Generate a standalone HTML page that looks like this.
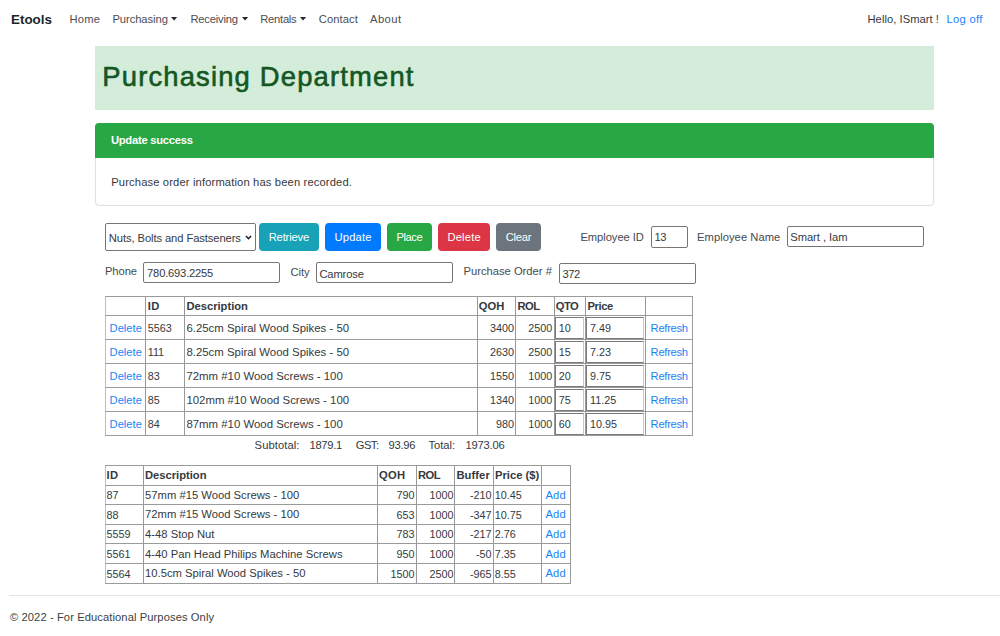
<!DOCTYPE html>
<html><head><meta charset="utf-8"><title>Purchasing</title>
<style>
html,body{margin:0;padding:0;background:#fff;width:1000px;height:636px;overflow:hidden;position:relative}
body{font-family:"Liberation Sans",sans-serif}
.t{position:absolute;white-space:pre;line-height:1;}
.b{position:absolute;}
</style></head><body>
<span class="t" style="left:11.00px;top:12.66px;font-size:13.40px;font-weight:bold;letter-spacing:0.013px;color:#212529">Etools</span>
<span class="t" style="left:69.60px;top:13.52px;font-size:11.20px;letter-spacing:0.165px;color:#4a4e53">Home</span>
<span class="t" style="left:112.40px;top:13.52px;font-size:11.20px;letter-spacing:-0.051px;color:#4a4e53">Purchasing</span>
<svg class="b" style="left:171.4px;top:16.6px" width="7" height="5" viewBox="0 0 7 5"><path d="M0 0 H6.2 L3.1 3.6 Z" fill="#25292d"/></svg>
<span class="t" style="left:190.40px;top:13.52px;font-size:11.20px;letter-spacing:-0.196px;color:#4a4e53">Receiving</span>
<svg class="b" style="left:241.7px;top:16.6px" width="7" height="5" viewBox="0 0 7 5"><path d="M0 0 H6.2 L3.1 3.6 Z" fill="#25292d"/></svg>
<span class="t" style="left:260.30px;top:13.52px;font-size:11.20px;letter-spacing:-0.261px;color:#4a4e53">Rentals</span>
<svg class="b" style="left:300px;top:16.6px" width="7" height="5" viewBox="0 0 7 5"><path d="M0 0 H6.2 L3.1 3.6 Z" fill="#25292d"/></svg>
<span class="t" style="left:318.80px;top:13.52px;font-size:11.20px;letter-spacing:0.086px;color:#4a4e53">Contact</span>
<span class="t" style="left:370.00px;top:13.52px;font-size:11.20px;letter-spacing:0.453px;color:#4a4e53">About</span>
<span class="t" style="left:867.50px;top:13.52px;font-size:11.20px;letter-spacing:0.039px;color:#35393d">Hello, ISmart !</span>
<span class="t" style="left:946.50px;top:13.52px;font-size:11.20px;letter-spacing:0.325px;color:#1a84f7">Log off</span>
<div class="b" style="left:95.00px;top:46.00px;width:839.00px;height:64.00px;background:#d4edda"></div>
<span class="t" style="left:102.30px;top:63.21px;font-size:27.40px;letter-spacing:1.168px;-webkit-text-stroke:0.6px #155724;color:#155724">Purchasing Department</span>
<div class="b" style="left:95.00px;top:123.00px;width:839.00px;height:82.50px;border:1px solid rgba(0,0,0,.125);border-radius:4px;box-sizing:border-box;overflow:hidden"></div>
<div class="b" style="left:95.00px;top:123.00px;width:839.00px;height:35.00px;background:#28a745;border-radius:4px 4px 0 0"></div>
<span class="t" style="left:110.90px;top:135.42px;font-size:11.20px;font-weight:bold;letter-spacing:-0.238px;color:#fff">Update success</span>
<span class="t" style="left:111.20px;top:176.52px;font-size:11.20px;letter-spacing:0.143px;color:#35393d">Purchase order information has been recorded.</span>
<div class="b" style="left:104.60px;top:223.00px;width:151.10px;height:27.70px;border:1px solid #767676;border-radius:2px;box-sizing:border-box;background:#fff"></div>
<span class="t" style="left:108.80px;top:232.72px;font-size:11.20px;letter-spacing:-0.086px;color:#35393d">Nuts, Bolts and Fastseners</span>
<svg class="b" style="left:245px;top:234.5px" width="7" height="5" viewBox="0 0 7 5"><path d="M0.9 0.9 L3.5 3.6 L6.1 0.9" fill="none" stroke="#212529" stroke-width="1.5"/></svg>
<div class="b" style="left:259.00px;top:223.00px;width:60.00px;height:28.00px;background:#17a2b8;border-radius:4px"></div>
<span class="t" style="left:268.65px;top:232.02px;font-size:11.20px;letter-spacing:-0.146px;color:#fff">Retrieve</span>
<div class="b" style="left:325.00px;top:223.00px;width:56.00px;height:28.00px;background:#007bff;border-radius:4px"></div>
<span class="t" style="left:334.55px;top:232.02px;font-size:11.20px;letter-spacing:0.156px;color:#fff">Update</span>
<div class="b" style="left:387.00px;top:223.00px;width:45.20px;height:28.00px;background:#28a745;border-radius:4px"></div>
<span class="t" style="left:396.40px;top:232.02px;font-size:11.20px;letter-spacing:-0.400px;color:#fff">Place</span>
<div class="b" style="left:438.00px;top:223.00px;width:52.20px;height:28.00px;background:#dc3545;border-radius:4px"></div>
<span class="t" style="left:447.40px;top:232.02px;font-size:11.20px;letter-spacing:0.206px;color:#fff">Delete</span>
<div class="b" style="left:496.20px;top:223.00px;width:44.90px;height:28.00px;background:#6c757d;border-radius:4px"></div>
<span class="t" style="left:505.70px;top:232.02px;font-size:11.20px;letter-spacing:-0.217px;color:#fff">Clear</span>
<span class="t" style="left:580.40px;top:231.62px;font-size:11.20px;letter-spacing:-0.052px;color:#464a4f">Employee ID</span>
<div class="b" style="left:651.30px;top:226.00px;width:36.30px;height:21.50px;border:1px solid #767676;border-radius:2px;box-sizing:border-box;background:#fff"></div>
<span class="t" style="left:654.50px;top:231.62px;font-size:11.20px;letter-spacing:-0.500px;color:#35393d">13</span>
<span class="t" style="left:697.00px;top:231.62px;font-size:11.20px;letter-spacing:0.053px;color:#464a4f">Employee Name</span>
<div class="b" style="left:787.30px;top:226.30px;width:137.00px;height:21.20px;border:1px solid #767676;border-radius:2px;box-sizing:border-box;background:#fff"></div>
<span class="t" style="left:790.30px;top:231.62px;font-size:11.20px;letter-spacing:-0.060px;color:#35393d">Smart , Iam</span>
<span class="t" style="left:105.00px;top:266.12px;font-size:11.20px;letter-spacing:-0.092px;color:#464a4f">Phone</span>
<div class="b" style="left:143.20px;top:262.40px;width:137.30px;height:21.00px;border:1px solid #767676;border-radius:2px;box-sizing:border-box;background:#fff"></div>
<span class="t" style="left:147.10px;top:268.32px;font-size:11.20px;letter-spacing:-0.199px;color:#35393d">780.693.2255</span>
<span class="t" style="left:290.40px;top:266.52px;font-size:11.20px;letter-spacing:-0.021px;color:#464a4f">City</span>
<div class="b" style="left:316.20px;top:262.40px;width:137.00px;height:21.00px;border:1px solid #767676;border-radius:2px;box-sizing:border-box;background:#fff"></div>
<span class="t" style="left:319.40px;top:268.52px;font-size:11.20px;letter-spacing:-0.136px;color:#35393d">Camrose</span>
<span class="t" style="left:463.50px;top:265.72px;font-size:11.20px;letter-spacing:0.005px;color:#464a4f">Purchase Order #</span>
<div class="b" style="left:559.30px;top:262.50px;width:136.50px;height:21.00px;border:1px solid #767676;border-radius:2px;box-sizing:border-box;background:#fff"></div>
<span class="t" style="left:562.50px;top:268.52px;font-size:11.20px;letter-spacing:-0.500px;color:#35393d">372</span>
<div class="b" style="left:104.50px;top:295.90px;width:1.00px;height:139.90px;background:#bdbdbd"></div>
<div class="b" style="left:145.00px;top:295.90px;width:1.00px;height:139.90px;background:#9a9a9a"></div>
<div class="b" style="left:184.00px;top:295.90px;width:1.00px;height:139.90px;background:#9a9a9a"></div>
<div class="b" style="left:477.00px;top:295.90px;width:1.00px;height:139.90px;background:#9a9a9a"></div>
<div class="b" style="left:515.00px;top:295.90px;width:1.00px;height:139.90px;background:#9a9a9a"></div>
<div class="b" style="left:554.00px;top:295.90px;width:1.00px;height:139.90px;background:#9a9a9a"></div>
<div class="b" style="left:585.00px;top:295.90px;width:1.00px;height:139.90px;background:#9a9a9a"></div>
<div class="b" style="left:645.00px;top:295.90px;width:1.00px;height:139.90px;background:#9a9a9a"></div>
<div class="b" style="left:692.00px;top:295.90px;width:1.00px;height:139.90px;background:#9a9a9a"></div>
<div class="b" style="left:104.50px;top:295.90px;width:588.50px;height:1.00px;background:#9a9a9a"></div>
<div class="b" style="left:104.50px;top:314.90px;width:588.50px;height:1.00px;background:#9a9a9a"></div>
<div class="b" style="left:104.50px;top:338.90px;width:588.50px;height:1.00px;background:#9a9a9a"></div>
<div class="b" style="left:104.50px;top:362.90px;width:588.50px;height:1.00px;background:#9a9a9a"></div>
<div class="b" style="left:104.50px;top:386.90px;width:588.50px;height:1.00px;background:#9a9a9a"></div>
<div class="b" style="left:104.50px;top:410.90px;width:588.50px;height:1.00px;background:#9a9a9a"></div>
<div class="b" style="left:104.50px;top:434.80px;width:588.50px;height:1.00px;background:#9a9a9a"></div>
<span class="t" style="left:147.70px;top:300.72px;font-size:11.20px;font-weight:bold;letter-spacing:0.500px;color:#35393d">ID</span>
<span class="t" style="left:186.40px;top:300.72px;font-size:11.20px;font-weight:bold;letter-spacing:0.000px;color:#35393d">Description</span>
<span class="t" style="left:478.75px;top:300.72px;font-size:11.20px;font-weight:bold;letter-spacing:0.107px;color:#35393d">QOH</span>
<span class="t" style="left:517.50px;top:300.72px;font-size:11.20px;font-weight:bold;letter-spacing:-0.500px;color:#35393d">ROL</span>
<span class="t" style="left:555.75px;top:300.72px;font-size:11.20px;font-weight:bold;letter-spacing:-0.500px;color:#35393d">QTO</span>
<span class="t" style="left:587.50px;top:300.72px;font-size:11.20px;font-weight:bold;letter-spacing:-0.408px;color:#35393d">Price</span>
<span class="t" style="left:109.60px;top:322.72px;font-size:11.20px;letter-spacing:-0.014px;color:#1a84f7">Delete</span>
<span class="t" style="left:147.70px;top:323.06px;font-size:10.80px;color:#35393d">5563</span>
<span class="t" style="left:186.40px;top:322.53px;font-size:11.42px;color:#35393d">6.25cm Spiral Wood Spikes - 50</span>
<span class="t" style="left:489.97px;top:323.06px;font-size:10.80px;color:#35393d">3400</span>
<span class="t" style="left:528.37px;top:323.06px;font-size:10.80px;color:#35393d">2500</span>
<div class="b" style="left:555.30px;top:317.20px;width:28.90px;height:21.50px;border:1px solid #7a7a7a;border-right-color:#c8c8c8;box-sizing:border-box"></div>
<span class="t" style="left:558.80px;top:323.06px;font-size:10.80px;color:#35393d">10</span>
<div class="b" style="left:586.30px;top:317.20px;width:58.20px;height:21.50px;border:1px solid #7a7a7a;border-right-color:#c8c8c8;box-sizing:border-box"></div>
<span class="t" style="left:590.00px;top:323.06px;font-size:10.80px;color:#35393d">7.49</span>
<span class="t" style="left:650.60px;top:322.72px;font-size:11.20px;letter-spacing:-0.283px;color:#1a84f7">Refresh</span>
<span class="t" style="left:109.60px;top:346.72px;font-size:11.20px;letter-spacing:-0.014px;color:#1a84f7">Delete</span>
<span class="t" style="left:147.70px;top:347.06px;font-size:10.80px;color:#35393d">111</span>
<span class="t" style="left:186.40px;top:346.53px;font-size:11.42px;color:#35393d">8.25cm Spiral Wood Spikes - 50</span>
<span class="t" style="left:489.97px;top:347.06px;font-size:10.80px;color:#35393d">2630</span>
<span class="t" style="left:528.37px;top:347.06px;font-size:10.80px;color:#35393d">2500</span>
<div class="b" style="left:555.30px;top:341.20px;width:28.90px;height:21.50px;border:1px solid #7a7a7a;border-right-color:#c8c8c8;box-sizing:border-box"></div>
<span class="t" style="left:558.80px;top:347.06px;font-size:10.80px;color:#35393d">15</span>
<div class="b" style="left:586.30px;top:341.20px;width:58.20px;height:21.50px;border:1px solid #7a7a7a;border-right-color:#c8c8c8;box-sizing:border-box"></div>
<span class="t" style="left:590.00px;top:347.06px;font-size:10.80px;color:#35393d">7.23</span>
<span class="t" style="left:650.60px;top:346.72px;font-size:11.20px;letter-spacing:-0.283px;color:#1a84f7">Refresh</span>
<span class="t" style="left:109.60px;top:370.72px;font-size:11.20px;letter-spacing:-0.014px;color:#1a84f7">Delete</span>
<span class="t" style="left:147.70px;top:371.06px;font-size:10.80px;color:#35393d">83</span>
<span class="t" style="left:186.40px;top:370.53px;font-size:11.42px;color:#35393d">72mm #10 Wood Screws - 100</span>
<span class="t" style="left:489.97px;top:371.06px;font-size:10.80px;color:#35393d">1550</span>
<span class="t" style="left:528.37px;top:371.06px;font-size:10.80px;color:#35393d">1000</span>
<div class="b" style="left:555.30px;top:365.20px;width:28.90px;height:21.50px;border:1px solid #7a7a7a;border-right-color:#c8c8c8;box-sizing:border-box"></div>
<span class="t" style="left:558.80px;top:371.06px;font-size:10.80px;color:#35393d">20</span>
<div class="b" style="left:586.30px;top:365.20px;width:58.20px;height:21.50px;border:1px solid #7a7a7a;border-right-color:#c8c8c8;box-sizing:border-box"></div>
<span class="t" style="left:590.00px;top:371.06px;font-size:10.80px;color:#35393d">9.75</span>
<span class="t" style="left:650.60px;top:370.72px;font-size:11.20px;letter-spacing:-0.283px;color:#1a84f7">Refresh</span>
<span class="t" style="left:109.60px;top:394.72px;font-size:11.20px;letter-spacing:-0.014px;color:#1a84f7">Delete</span>
<span class="t" style="left:147.70px;top:395.06px;font-size:10.80px;color:#35393d">85</span>
<span class="t" style="left:186.40px;top:394.53px;font-size:11.42px;color:#35393d">102mm #10 Wood Screws - 100</span>
<span class="t" style="left:489.97px;top:395.06px;font-size:10.80px;color:#35393d">1340</span>
<span class="t" style="left:528.37px;top:395.06px;font-size:10.80px;color:#35393d">1000</span>
<div class="b" style="left:555.30px;top:389.20px;width:28.90px;height:21.50px;border:1px solid #7a7a7a;border-right-color:#c8c8c8;box-sizing:border-box"></div>
<span class="t" style="left:558.80px;top:395.06px;font-size:10.80px;color:#35393d">75</span>
<div class="b" style="left:586.30px;top:389.20px;width:58.20px;height:21.50px;border:1px solid #7a7a7a;border-right-color:#c8c8c8;box-sizing:border-box"></div>
<span class="t" style="left:590.00px;top:395.06px;font-size:10.80px;color:#35393d">11.25</span>
<span class="t" style="left:650.60px;top:394.72px;font-size:11.20px;letter-spacing:-0.283px;color:#1a84f7">Refresh</span>
<span class="t" style="left:109.60px;top:418.72px;font-size:11.20px;letter-spacing:-0.014px;color:#1a84f7">Delete</span>
<span class="t" style="left:147.70px;top:419.06px;font-size:10.80px;color:#35393d">84</span>
<span class="t" style="left:186.40px;top:418.53px;font-size:11.42px;color:#35393d">87mm #10 Wood Screws - 100</span>
<span class="t" style="left:495.96px;top:419.06px;font-size:10.80px;color:#35393d">980</span>
<span class="t" style="left:528.37px;top:419.06px;font-size:10.80px;color:#35393d">1000</span>
<div class="b" style="left:555.30px;top:413.20px;width:28.90px;height:21.50px;border:1px solid #7a7a7a;border-right-color:#c8c8c8;box-sizing:border-box"></div>
<span class="t" style="left:558.80px;top:419.06px;font-size:10.80px;color:#35393d">60</span>
<div class="b" style="left:586.30px;top:413.20px;width:58.20px;height:21.50px;border:1px solid #7a7a7a;border-right-color:#c8c8c8;box-sizing:border-box"></div>
<span class="t" style="left:590.00px;top:419.06px;font-size:10.80px;color:#35393d">10.95</span>
<span class="t" style="left:650.60px;top:418.72px;font-size:11.20px;letter-spacing:-0.283px;color:#1a84f7">Refresh</span>
<span class="t" style="left:254.60px;top:439.82px;font-size:11.20px;letter-spacing:0.077px;color:#35393d">Subtotal:</span>
<span class="t" style="left:309.50px;top:439.82px;font-size:11.20px;letter-spacing:-0.314px;color:#35393d">1879.1</span>
<span class="t" style="left:355.70px;top:439.82px;font-size:11.20px;letter-spacing:-0.500px;color:#35393d">GST:</span>
<span class="t" style="left:388.50px;top:439.82px;font-size:11.20px;letter-spacing:-0.239px;color:#35393d">93.96</span>
<span class="t" style="left:428.50px;top:439.82px;font-size:11.20px;letter-spacing:-0.034px;color:#35393d">Total:</span>
<span class="t" style="left:465.50px;top:439.82px;font-size:11.20px;letter-spacing:-0.215px;color:#35393d">1973.06</span>
<div class="b" style="left:104.50px;top:465.00px;width:1.00px;height:118.50px;background:#bdbdbd"></div>
<div class="b" style="left:142.80px;top:465.00px;width:1.00px;height:118.50px;background:#9a9a9a"></div>
<div class="b" style="left:377.10px;top:465.00px;width:1.00px;height:118.50px;background:#9a9a9a"></div>
<div class="b" style="left:415.80px;top:465.00px;width:1.00px;height:118.50px;background:#9a9a9a"></div>
<div class="b" style="left:454.10px;top:465.00px;width:1.00px;height:118.50px;background:#9a9a9a"></div>
<div class="b" style="left:492.80px;top:465.00px;width:1.00px;height:118.50px;background:#9a9a9a"></div>
<div class="b" style="left:541.00px;top:465.00px;width:1.00px;height:118.50px;background:#9a9a9a"></div>
<div class="b" style="left:570.10px;top:465.00px;width:1.00px;height:118.50px;background:#9a9a9a"></div>
<div class="b" style="left:104.50px;top:465.00px;width:466.60px;height:1.00px;background:#9a9a9a"></div>
<div class="b" style="left:104.50px;top:484.70px;width:466.60px;height:1.00px;background:#9a9a9a"></div>
<div class="b" style="left:104.50px;top:504.20px;width:466.60px;height:1.00px;background:#9a9a9a"></div>
<div class="b" style="left:104.50px;top:523.70px;width:466.60px;height:1.00px;background:#9a9a9a"></div>
<div class="b" style="left:104.50px;top:543.20px;width:466.60px;height:1.00px;background:#9a9a9a"></div>
<div class="b" style="left:104.50px;top:562.70px;width:466.60px;height:1.00px;background:#9a9a9a"></div>
<div class="b" style="left:104.50px;top:582.50px;width:466.60px;height:1.00px;background:#9a9a9a"></div>
<span class="t" style="left:106.50px;top:470.22px;font-size:11.20px;font-weight:bold;letter-spacing:0.500px;color:#35393d">ID</span>
<span class="t" style="left:145.00px;top:470.22px;font-size:11.20px;font-weight:bold;letter-spacing:0.000px;color:#35393d">Description</span>
<span class="t" style="left:379.10px;top:470.22px;font-size:11.20px;font-weight:bold;letter-spacing:0.232px;color:#35393d">QOH</span>
<span class="t" style="left:417.90px;top:470.22px;font-size:11.20px;font-weight:bold;letter-spacing:-0.500px;color:#35393d">ROL</span>
<span class="t" style="left:456.40px;top:470.22px;font-size:11.20px;font-weight:bold;letter-spacing:0.083px;color:#35393d">Buffer</span>
<span class="t" style="left:494.90px;top:470.22px;font-size:11.20px;font-weight:bold;letter-spacing:0.027px;color:#35393d">Price ($)</span>
<span class="t" style="left:106.60px;top:490.06px;font-size:10.80px;color:#35393d">87</span>
<span class="t" style="left:145.00px;top:489.68px;font-size:11.25px;color:#35393d">57mm #15 Wood Screws - 100</span>
<span class="t" style="left:396.56px;top:490.06px;font-size:10.80px;color:#35393d">790</span>
<span class="t" style="left:429.47px;top:490.06px;font-size:10.80px;color:#35393d">1000</span>
<span class="t" style="left:470.00px;top:490.06px;font-size:10.80px;color:#35393d">-210</span>
<span class="t" style="left:494.70px;top:490.06px;font-size:10.80px;color:#35393d">10.45</span>
<span class="t" style="left:545.50px;top:489.72px;font-size:11.20px;letter-spacing:0.132px;color:#1a84f7">Add</span>
<span class="t" style="left:106.60px;top:509.71px;font-size:10.80px;color:#35393d">88</span>
<span class="t" style="left:145.00px;top:509.33px;font-size:11.25px;color:#35393d">72mm #15 Wood Screws - 100</span>
<span class="t" style="left:396.56px;top:509.71px;font-size:10.80px;color:#35393d">653</span>
<span class="t" style="left:429.47px;top:509.71px;font-size:10.80px;color:#35393d">1000</span>
<span class="t" style="left:470.00px;top:509.71px;font-size:10.80px;color:#35393d">-347</span>
<span class="t" style="left:494.70px;top:509.71px;font-size:10.80px;color:#35393d">10.75</span>
<span class="t" style="left:545.50px;top:509.37px;font-size:11.20px;letter-spacing:0.132px;color:#1a84f7">Add</span>
<span class="t" style="left:106.60px;top:529.36px;font-size:10.80px;color:#35393d">5559</span>
<span class="t" style="left:145.00px;top:528.98px;font-size:11.25px;color:#35393d">4-48 Stop Nut</span>
<span class="t" style="left:396.56px;top:529.36px;font-size:10.80px;color:#35393d">783</span>
<span class="t" style="left:429.47px;top:529.36px;font-size:10.80px;color:#35393d">1000</span>
<span class="t" style="left:470.00px;top:529.36px;font-size:10.80px;color:#35393d">-217</span>
<span class="t" style="left:494.70px;top:529.36px;font-size:10.80px;color:#35393d">2.76</span>
<span class="t" style="left:545.50px;top:529.02px;font-size:11.20px;letter-spacing:0.132px;color:#1a84f7">Add</span>
<span class="t" style="left:106.60px;top:549.01px;font-size:10.80px;color:#35393d">5561</span>
<span class="t" style="left:145.00px;top:548.63px;font-size:11.25px;color:#35393d">4-40 Pan Head Philips Machine Screws</span>
<span class="t" style="left:396.56px;top:549.01px;font-size:10.80px;color:#35393d">950</span>
<span class="t" style="left:429.47px;top:549.01px;font-size:10.80px;color:#35393d">1000</span>
<span class="t" style="left:475.99px;top:549.01px;font-size:10.80px;color:#35393d">-50</span>
<span class="t" style="left:494.70px;top:549.01px;font-size:10.80px;color:#35393d">7.35</span>
<span class="t" style="left:545.50px;top:548.67px;font-size:11.20px;letter-spacing:0.132px;color:#1a84f7">Add</span>
<span class="t" style="left:106.60px;top:568.66px;font-size:10.80px;color:#35393d">5564</span>
<span class="t" style="left:145.00px;top:568.28px;font-size:11.25px;color:#35393d">10.5cm Spiral Wood Spikes - 50</span>
<span class="t" style="left:390.57px;top:568.66px;font-size:10.80px;color:#35393d">1500</span>
<span class="t" style="left:429.47px;top:568.66px;font-size:10.80px;color:#35393d">2500</span>
<span class="t" style="left:470.00px;top:568.66px;font-size:10.80px;color:#35393d">-965</span>
<span class="t" style="left:494.70px;top:568.66px;font-size:10.80px;color:#35393d">8.55</span>
<span class="t" style="left:545.50px;top:568.32px;font-size:11.20px;letter-spacing:0.132px;color:#1a84f7">Add</span>
<div class="b" style="left:9.00px;top:595.00px;width:991.00px;height:1.00px;background:#e3e3e3"></div>
<span class="t" style="left:10.00px;top:611.52px;font-size:11.20px;letter-spacing:0.082px;color:#3a3f44">© 2022 - For Educational Purposes Only</span>
</body></html>
